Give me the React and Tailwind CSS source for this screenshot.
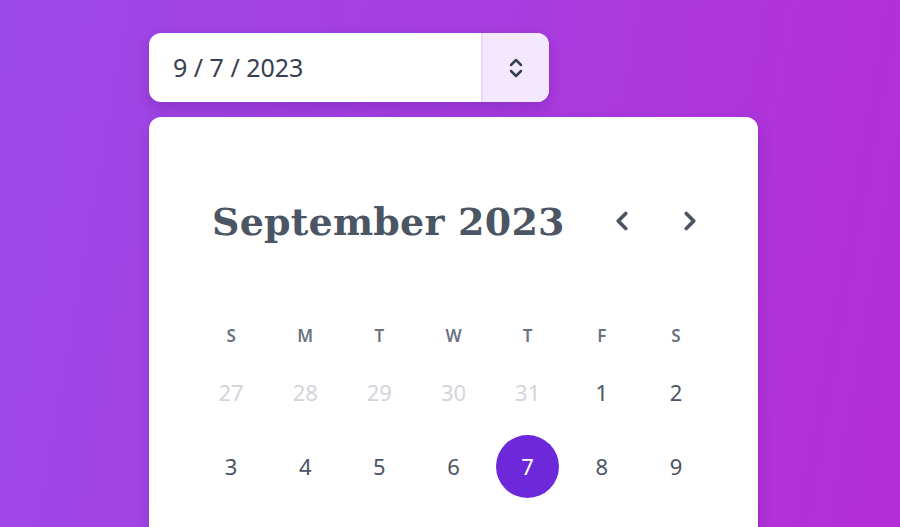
import { ChevronLeft, ChevronRight, ChevronsUpDown } from "lucide-react";

const weekDays = ["S", "M", "T", "W", "T", "F", "S"];

const days = [
  { n: 27, muted: true },
  { n: 28, muted: true },
  { n: 29, muted: true },
  { n: 30, muted: true },
  { n: 31, muted: true },
  { n: 1 },
  { n: 2 },
  { n: 3 },
  { n: 4 },
  { n: 5 },
  { n: 6 },
  { n: 7, selected: true },
  { n: 8 },
  { n: 9 },
];

export default function App() {
  return (
    <div className="min-h-[527px] h-[527px] overflow-hidden bg-[linear-gradient(100deg,#9c49e8_0%,#a93ddf_50%,#b32ed6_100%)] pl-[149px] pt-[33px] font-['Noto_Sans',sans-serif]">
      {/* Date field */}
      <div className="flex h-[69px] w-[400px] overflow-hidden rounded-xl bg-white shadow-[0_6px_14px_rgba(76,20,140,0.3)]">
        <div className="flex flex-1 items-center pl-6 text-[25px] text-[#374151]">
          9 / 7 / 2023
        </div>
        <button className="flex w-[68px] items-center justify-center border-l-2 border-[#e9d5ff] bg-[#f3e8ff] text-[#374151]">
          <ChevronsUpDown size={24} strokeWidth={2.5} />
        </button>
      </div>

      {/* Popover */}
      <div className="mt-[15px] h-[440px] w-[609px] rounded-xl bg-white px-[45px] pt-[72px] shadow-[0_6px_14px_rgba(76,20,140,0.25)]">
        <div className="flex h-[64px] items-center justify-between pl-[18px] pr-[8px]">
          <h2 className="font-['DejaVu_Serif',serif] text-[38px] font-bold tracking-[0.2px] text-[#4b5563]">
            September 2023
          </h2>
          <div className="flex items-center gap-[38px] text-[#4b5563]">
            <ChevronLeft size={30} strokeWidth={3} />
            <ChevronRight size={30} strokeWidth={3} />
          </div>
        </div>

        <div className="mt-[64px] grid h-[38px] grid-cols-7 items-center text-center text-[17px] font-semibold text-[#6b7280]">
          {weekDays.map((d, i) => (
            <div key={i}>{d}</div>
          ))}
        </div>

        <div className="grid grid-cols-7">
          {days.map((d) => (
            <div key={d.n} className="flex h-[74px] items-center justify-center">
              <span
                className={
                  d.selected
                    ? "flex h-[63px] w-[63px] items-center justify-center rounded-full bg-[#6d28d9] text-[22px] text-white"
                    : d.muted
                    ? "text-[22px] text-[#d1d5db]"
                    : "text-[22px] text-[#4b5563]"
                }
              >
                {d.n}
              </span>
            </div>
          ))}
        </div>
      </div>
    </div>
  );
}
